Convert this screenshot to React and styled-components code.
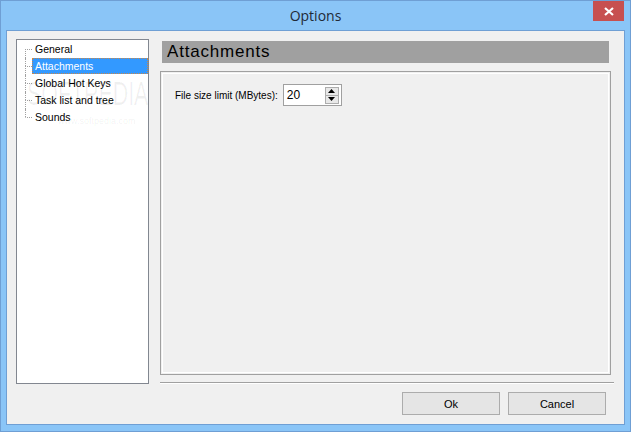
import React from "react";
import styled, { createGlobalStyle } from "styled-components";

const Global = createGlobalStyle`
  html, body { margin: 0; padding: 0; background: #8ac5f7; }
  body { font-family: "Liberation Sans", Arial, sans-serif; font-size: 11px; color: #000; }
  * { box-sizing: border-box; }
`;

const Window = styled.div`
  width: 631px;
  height: 432px;
  background: #8ac5f7;
  border: 1px solid #6f9fd4;
  display: flex;
  flex-direction: column;
`;

const TitleBar = styled.div`
  height: 29px;
  display: grid;
  grid-template-columns: 1fr auto 1fr;
  align-items: start;
`;

const Title = styled.div`
  grid-column: 2;
  font-family: "Open Sans", "Noto Sans", sans-serif;
  font-size: 14px;
  color: #1f2a36;
  line-height: 30px;
`;

const CloseButton = styled.div`
  grid-column: 3;
  justify-self: end;
  margin-right: 6px;
  width: 31px;
  height: 20px;
  background: #c75050;
  display: flex;
  align-items: center;
  justify-content: center;
`;

const Client = styled.div`
  flex: 1;
  margin: 0 5px 6px 5px;
  border: 1px solid #6f9fd4;
  background: #f0f0f0;
  padding: 8px 9px 8px 9px;
  display: flex;
  flex-direction: column;
  position: relative;
  overflow: hidden;
`;

const Main = styled.div`
  display: flex;
  gap: 11px;
  height: 345px;
`;

const Tree = styled.div`
  flex-shrink: 0;
  width: 133px;
  height: 345px;
  background: #fff;
  border: 1px solid #828790;
  padding-top: 1px;
  display: flex;
  flex-direction: column;
`;

const Row = styled.div`
  height: 17px;
  display: flex;
  align-items: stretch;
`;

const Connector = styled.div`
  width: 7px;
  margin-left: 8px;
  display: flex;
  flex-direction: column;
`;

const HalfTop = styled.div`
  height: 8px;
  border-left: 1px dotted ${p => (p.$hidden ? "transparent" : "#a0a0a0")};
`;

const HalfBottom = styled.div`
  flex: 1;
  border-top: 1px dotted #a0a0a0;
  border-left: 1px dotted ${p => (p.$hidden ? "transparent" : "#a0a0a0")};
`;

const Label = styled.div`
  flex: 1;
  height: 16px;
  line-height: 15px;
  padding-left: 2px;
  font-size: 10.5px;
  color: ${p => (p.$selected ? "#fff" : "#000")};
  background: ${p => (p.$selected ? "#3399ff" : "transparent")};
  border: 1px dotted ${p => (p.$selected ? "#c8874a" : "transparent")};
  white-space: nowrap;
`;

const RightPane = styled.div`
  flex-shrink: 0;
  width: 454px;
  display: flex;
  flex-direction: column;
`;

const Heading = styled.div`
  margin: 2px 5px 0 2px;
  height: 22px;
  background: #a0a0a0;
  font-size: 17px;
  letter-spacing: 0.8px;
  line-height: 22px;
  padding-left: 5px;
  color: #000;
`;

const GroupBox = styled.div`
  margin-top: 8px;
  width: 451px;
  height: 305px;
  border: 1px solid #a0a0a0;
  box-shadow: inset 0 0 0 1px #f0f0f0, inset 0 0 0 2px #fff;
  padding: 12px 14px;
`;

const Field = styled.div`
  display: flex;
  align-items: center;
  gap: 5px;
`;

const FieldLabel = styled.span`
  font-size: 10px;
  color: #000;
`;

const SpinBox = styled.div`
  width: 59px;
  height: 22px;
  background: #fff;
  border: 1px solid #a0a0a0;
  display: flex;
  align-items: center;
  padding: 2px 2px 2px 3px;
`;

const SpinValue = styled.span`
  flex: 1;
  font-size: 12px;
`;

const SpinButtons = styled.div`
  width: 14px;
  height: 17px;
  display: flex;
  flex-direction: column;
`;

const SpinBtn = styled.div`
  flex: 1;
  background: #e8e8e8;
  border: 1px solid #adadad;
  display: flex;
  align-items: center;
  justify-content: center;
  & + & { border-top: none; }
`;

const Separator = styled.div`
  margin-top: 7px;
  width: 454px;
  height: 2px;
  border-top: 1px solid #a0a0a0;
  border-bottom: 1px solid #fff;
`;

const ButtonRow = styled.div`
  display: flex;
  justify-content: flex-end;
  gap: 8px;
  margin-top: 8px;
  padding-right: 9px;
`;

const Button = styled.div`
  width: 98px;
  height: 23px;
  border: 1px solid #acacac;
  background: #e5e5e5;
  display: flex;
  align-items: center;
  justify-content: center;
  font-size: 11px;
  color: #000;
`;

const Watermark = styled.div`
  position: absolute;
  left: ${p => p.$x}px;
  top: ${p => p.$y}px;
  font-size: ${p => p.$size}px;
  font-weight: ${p => (p.$bold ? "bold" : "normal")};
  line-height: 1;
  transform: scaleX(${p => p.$sx || 1});
  transform-origin: left top;
  color: rgba(0, 0, 0, 0.06);
  pointer-events: none;
  white-space: nowrap;
`;

const items = ["General", "Attachments", "Global Hot Keys", "Task list and tree", "Sounds"];

const Arrow = ({ up }) => (
  <svg width="7" height="4" viewBox="0 0 7 4">
    <path d={up ? "M3.5 0 L7 4 L0 4 Z" : "M0 0 L7 0 L3.5 4 Z"} fill="#000" />
  </svg>
);

export default function App() {
  return (
    <>
      <Global />
      <Window>
        <TitleBar>
          <Title>Options</Title>
          <CloseButton>
            <svg width="10" height="9" viewBox="0 0 10 9">
              <path d="M1 1 L9 8 M9 1 L1 8" stroke="#fff" strokeWidth="2.2" />
            </svg>
          </CloseButton>
        </TitleBar>
        <Client>
          <Main>
            <Tree>
              {items.map((t, i) => (
                <Row key={t}>
                  <Connector>
                    <HalfTop $hidden={i === 0} />
                    <HalfBottom $hidden={i === items.length - 1} />
                  </Connector>
                  <Label $selected={i === 1}>{t}</Label>
                </Row>
              ))}
            </Tree>
            <RightPane>
              <Heading>Attachments</Heading>
              <GroupBox>
                <Field>
                  <FieldLabel>File size limit (MBytes):</FieldLabel>
                  <SpinBox>
                    <SpinValue>20</SpinValue>
                    <SpinButtons>
                      <SpinBtn><Arrow up /></SpinBtn>
                      <SpinBtn><Arrow /></SpinBtn>
                    </SpinButtons>
                  </SpinBox>
                </Field>
              </GroupBox>
              <Separator />
            </RightPane>
          </Main>
          <ButtonRow>
            <Button>Ok</Button>
            <Button>Cancel</Button>
          </ButtonRow>
          <Watermark $x={20} $y={45} $size={34} $sx={0.63}>SOFTPEDIA</Watermark>
          <Watermark $x={51} $y={86} $size={9}>www.softpedia.com</Watermark>
        </Client>
      </Window>
    </>
  );
}
